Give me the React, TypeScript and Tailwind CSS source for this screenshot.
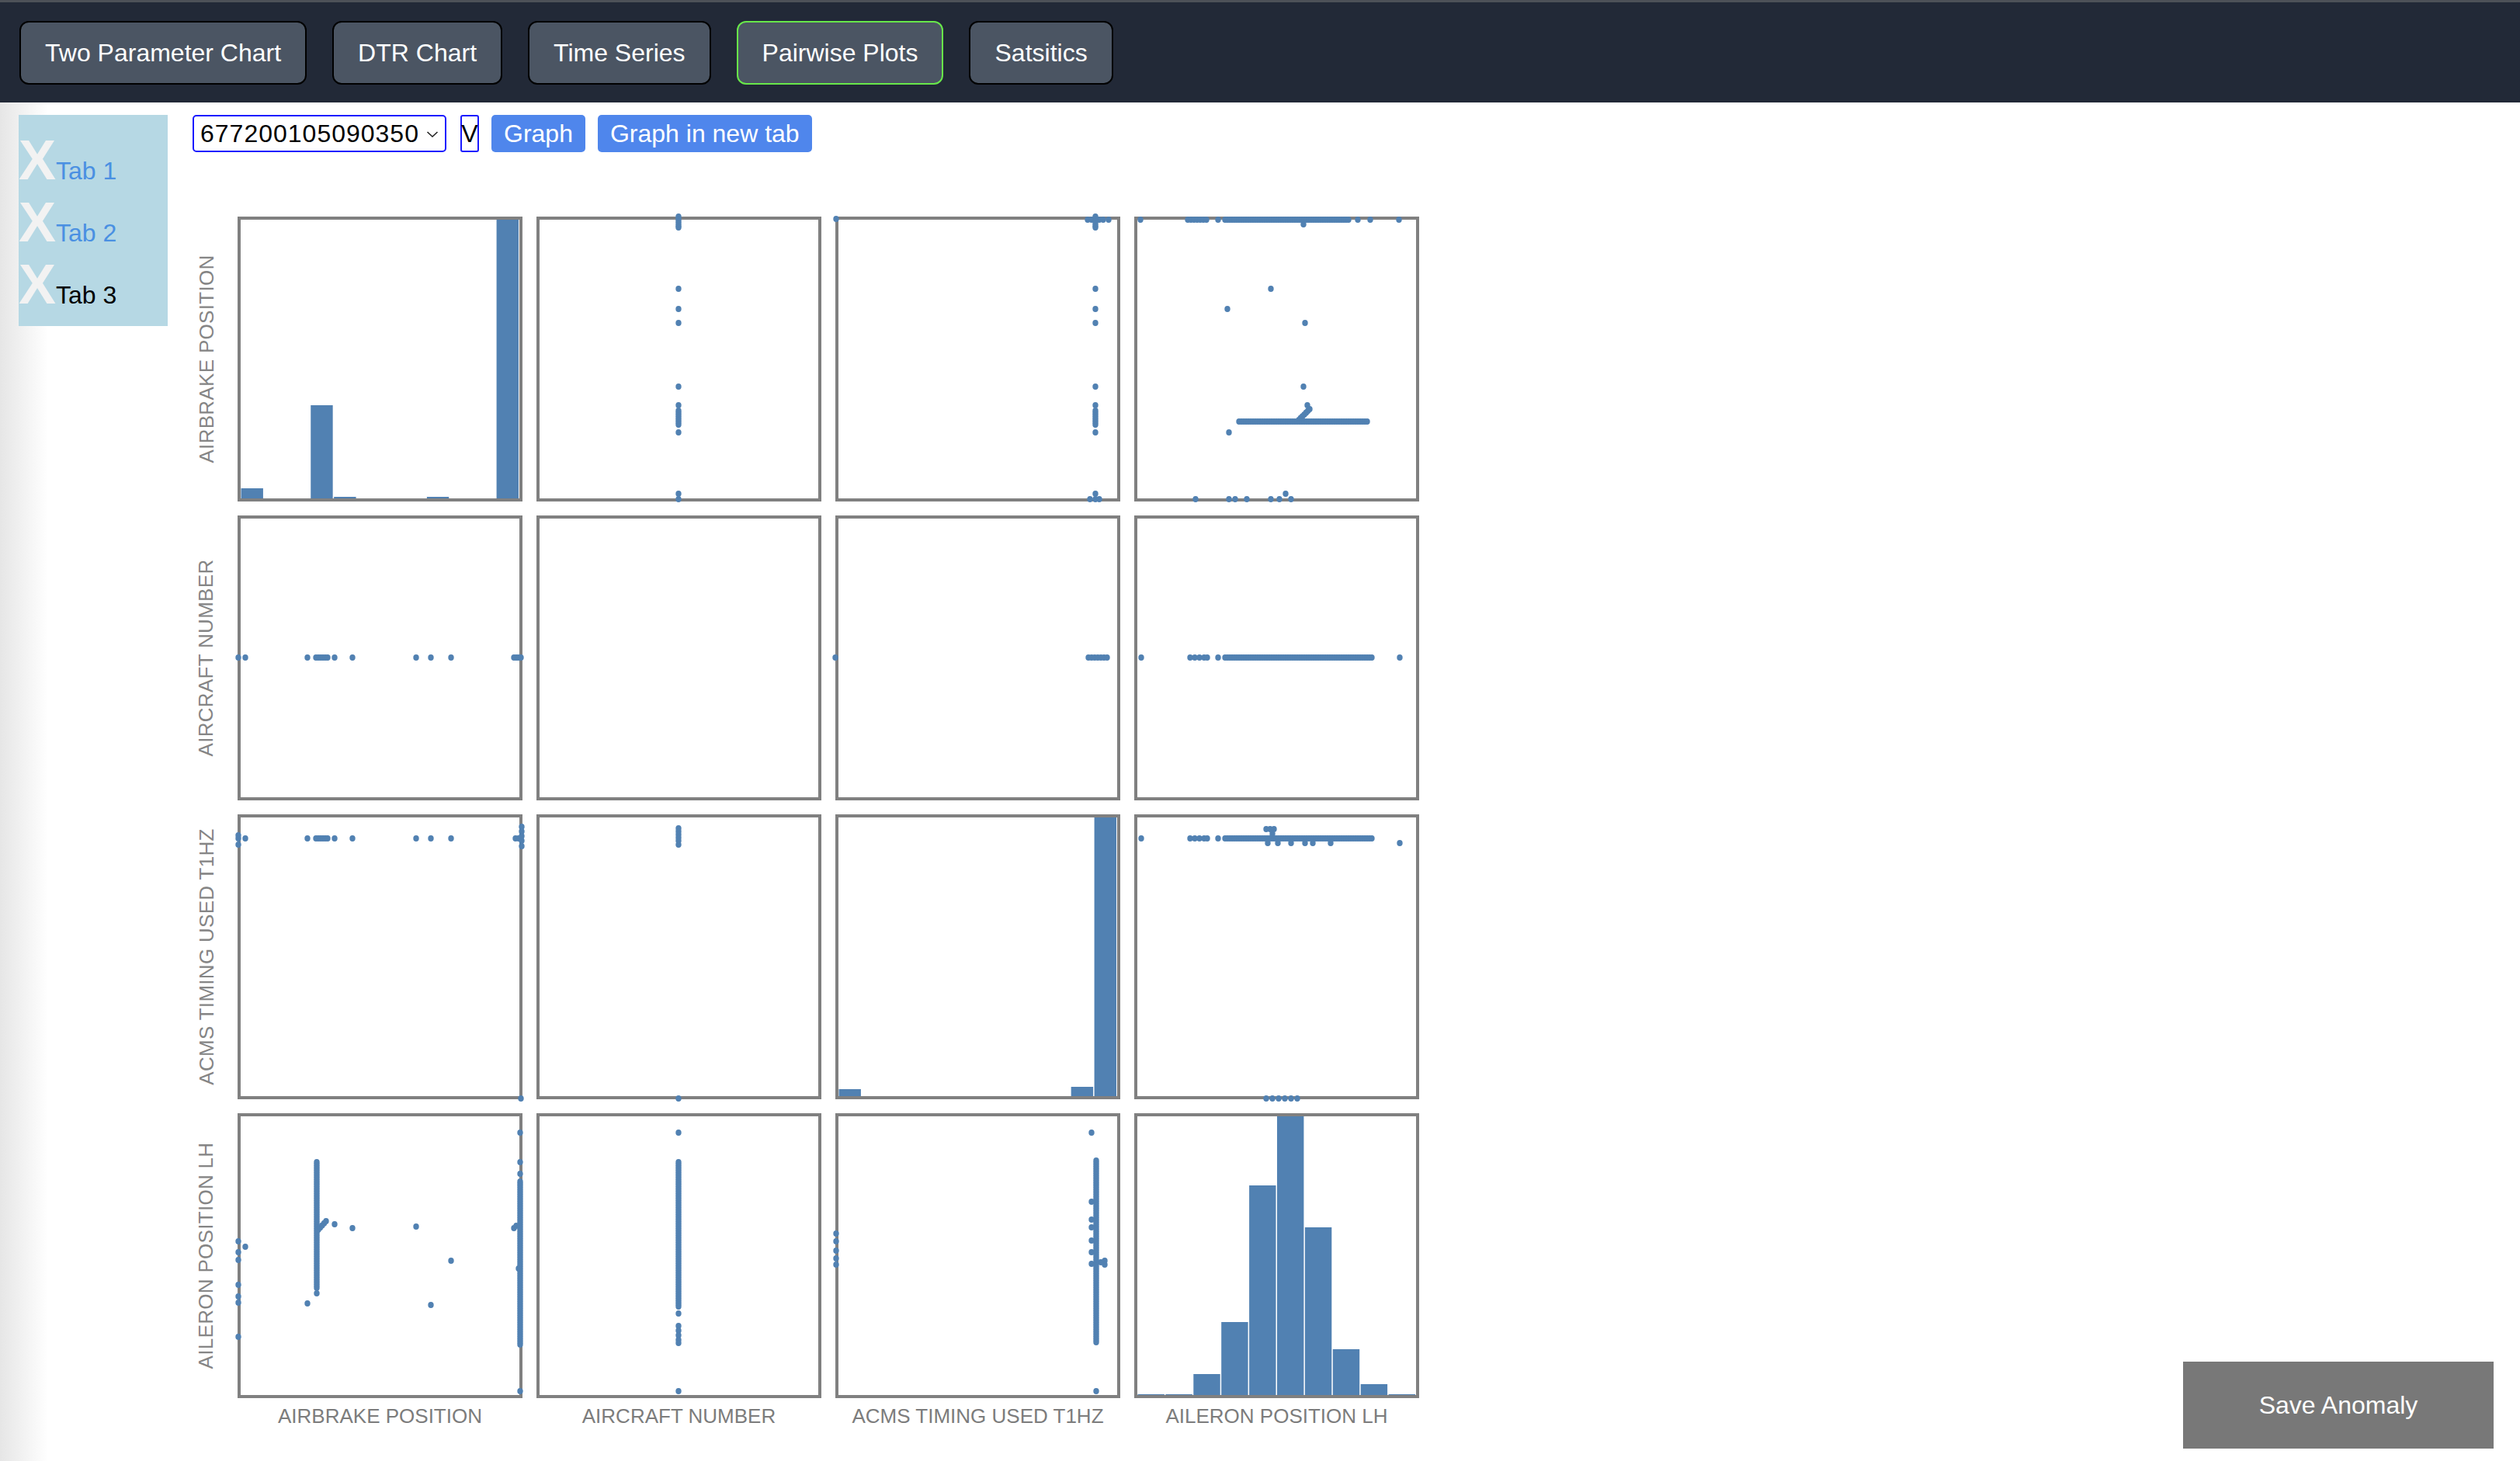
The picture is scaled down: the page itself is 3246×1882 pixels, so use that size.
import React from "react";

type P = [number, number];

const DOT = "#5181b2";

const range = (a: number, b: number, step = 3) => {
  const out: number[] = [];
  for (let v = a; v <= b; v += step) out.push(v);
  return out;
};
const atX = (x: number, ys: number[]): P[] => ys.map((y) => [x, y]);
const atY = (y: number, xs: number[]): P[] => xs.map((x) => [x, y]);
const seg = (x1: number, y1: number, x2: number, y2: number, n = 6): P[] =>
  Array.from({ length: n + 1 }, (_, i) => [x1 + ((x2 - x1) * i) / n, y1 + ((y2 - y1) * i) / n]);

// airbrake position values along x
const airX = [1, 10, 90, ...range(101, 118, 3), 125, 148, 230, 249, 275, ...range(356, 366, 3)];
// airbrake position values along y
const airY = [0, 3, 6, 9, 12, 14, 93, 119, 137, 219, 243, ...range(250, 268, 3), 278, 357, 364];
// aileron values along x
const ailX = [9, 72, 78, 84, 90, 94, 108, ...range(117, 308, 3), 342];

type Hist = { n: number; h: number[] };

const cells: { points?: P[]; bars?: Hist }[][] = [
  [
    { bars: { n: 12, h: [13, 0, 0, 120, 2, 0, 0, 0, 2, 0, 0, 359] } },
    { points: atX(183, airY) },
    {
      points: [
        ...atY(4, [325, 330, 340, 345, 352]),
        ...atX(335, airY),
        [1, 3],
        [328, 364],
        [340, 364],
      ],
    },
    {
      points: [
        ...atY(4, [8, 69, 73, 77, 81, 85, 89, 93, 108, ...range(117, 277, 3), 288, 304, 341]),
        [218, 10],
        [176, 93],
        [120, 119],
        [220, 137],
        [218, 219],
        [223, 243],
        ...seg(212, 262, 226, 248),
        ...atY(264, range(135, 301, 3)),
        [122, 278],
        [195, 357],
        ...atY(364, [79, 122, 130, 145, 176, 187, 202]),
      ],
    },
  ],
  [
    { points: atY(183, airX) },
    {},
    { points: [[0, 183], ...atY(183, range(326, 351, 4))] },
    { points: atY(183, ailX) },
  ],
  [
    {
      points: [
        ...atY(31, airX.filter((x) => x < 300)),
        [1, 27],
        [1, 39],
        [358, 31],
        [362, 31],
        ...atX(366, [16, 22, 28, 34, 41]),
        [365, 366],
      ],
    },
    { points: [...atX(183, [18, 22, 26, 30, 34, 39]), [183, 366]] },
    { bars: { n: 12, h: [9, 0, 0, 0, 0, 0, 0, 0, 0, 0, 12, 359] } },
    {
      points: [
        ...atY(31, ailX.filter((x) => x < 330)),
        [342, 37],
        ...atY(19, [170, 175, 180]),
        ...atY(25, [178]),
        ...atY(37, [172, 185, 202, 220, 230, 253]),
        ...atY(366, [170, 178, 186, 194, 202, 210]),
      ],
    },
  ],
  [
    {
      points: [
        ...atX(1, [165, 179, 189, 221, 236, 244, 288]),
        [10, 172],
        ...atX(102, range(63, 226, 3)),
        [102, 232],
        [90, 245],
        ...seg(104, 150, 114, 139, 4),
        [125, 143],
        [148, 148],
        [230, 146],
        [249, 247],
        [275, 190],
        ...atX(364, [25, 63, 78, ...range(88, 299, 3), 358]),
        [356, 148],
        [359, 145],
        [362, 200],
      ],
    },
    { points: atX(183, [25, ...range(63, 250, 3), 258, 274, 280, 286, 292, 296, 358]) },
    {
      points: [
        ...atX(1, [155, 165, 177, 187, 195]),
        [330, 25],
        ...atX(336, range(61, 296, 3)),
        ...atX(330, [114, 137, 147, 164, 179, 194]),
        [347, 190],
        [347, 195],
        [342, 192],
        [336, 358],
      ],
    },
    { bars: { n: 10, h: [1, 1, 27, 94, 270, 359, 216, 59, 14, 1] } },
  ],
];

const names = ["AIRBRAKE POSITION", "AIRCRAFT NUMBER", "ACMS TIMING USED T1HZ", "AILERON POSITION LH"];

function Cell({ points = [], bars }: { points?: P[]; bars?: Hist }) {
  const w = bars ? 359 / bars.n : 0;
  return (
    <svg width={367} height={367} className="block shrink-0 overflow-visible">
      <rect x={2} y={2} width={363} height={363} fill="#fff" stroke="#808080" strokeWidth={4} />
      {bars &&
        bars.h.map((h, i) =>
          h > 0 ? (
            <rect key={i} x={4 + i * w + 0.5} y={363 - h} width={w - 1.5} height={h} fill={DOT} />
          ) : null
        )}
      {points.map(([x, y], i) => (
        <ellipse key={i} cx={x} cy={y} rx={3.7} ry={4.1} fill={DOT} />
      ))}
    </svg>
  );
}

const tabs = ["Two Parameter Chart", "DTR Chart", "Time Series", "Pairwise Plots", "Satsitics"];

export default function App() {
  return (
    <div className="h-[1882px] flex flex-col bg-white font-['Liberation_Sans',Arial,sans-serif] overflow-hidden">
      {/* top nav */}
      <nav className="h-[132px] shrink-0 bg-[#222937] border-t-[3px] border-[#4d5158] flex items-center gap-[33px] px-[25px]">
        {tabs.map((t) => (
          <button
            key={t}
            className={`h-[82px] px-[31px] rounded-[12px] border-2 bg-[#4b5563] text-white text-[32px] ${
              t === "Pairwise Plots" ? "border-[#68e84a]" : "border-black"
            }`}
          >
            {t}
          </button>
        ))}
      </nav>

      <div className="flex-1 flex bg-[linear-gradient(to_right,#e6e6e6,#ffffff_62px)]">
        {/* tab list */}
        <aside className="ml-[24px] mt-[16px] w-[192px] h-[272px] shrink-0 bg-[#b6d8e4] pt-[18px]">
          {["Tab 1", "Tab 2", "Tab 3"].map((t, i) => (
            <div key={t} className="h-[80px] text-[72px] leading-[80px] whitespace-nowrap">
              <span className="text-[#f2f2f2] font-bold">X</span>
              <span className={`text-[32px] leading-none ${i === 2 ? "text-black" : "text-[#4a90e2]"}`}>{t}</span>
            </div>
          ))}
        </aside>

        <main className="ml-[32px] mt-[16px] shrink-0">
          <div className="h-[48px] flex items-stretch">
            <div className="w-[327px] border-2 border-[#1a1aff] rounded-[5px] pl-[8px] pr-[8px] flex items-center justify-between text-[32px] text-black tracking-[1px]">
              <span>677200105090350</span>
              <svg width="16" height="10" viewBox="0 0 16 10" className="mt-[2px]">
                <polyline points="1.5,2 8,8 14.5,2" fill="none" stroke="#222" strokeWidth="1.6" />
              </svg>
            </div>
            <div className="ml-[18px] w-[24px] border-2 border-[#1a1aff] rounded-[3px] flex items-center justify-center text-[32px] text-black">
              V
            </div>
            <button className="ml-[16px] px-[16px] bg-[#4f86ec] rounded-[5px] text-white text-[32px]">Graph</button>
            <button className="ml-[16px] px-[16px] bg-[#4f86ec] rounded-[5px] text-white text-[32px]">
              Graph in new tab
            </button>
          </div>

          {/* pairwise grid */}
          <div className="mt-[83px] flex flex-col gap-[18px]">
            {cells.map((row, r) => (
              <div key={r} className="flex">
                <div className="w-[36px] mr-[22px] h-[367px] flex items-center justify-center">
                  <span className="shrink-0 -rotate-90 whitespace-nowrap text-[26px] text-[#858585] tracking-[0.3px]">
                    {names[r]}
                  </span>
                </div>
                <div className="flex gap-[18px]">
                  {row.map((c, i) => (
                    <Cell key={i} points={c.points} bars={c.bars} />
                  ))}
                </div>
              </div>
            ))}
          </div>
          <div className="ml-[58px] mt-[4px] flex gap-[18px]">
            {names.map((n) => (
              <div key={n} className="w-[367px] text-center text-[26px] text-[#7c7c7c] whitespace-nowrap">
                {n}
              </div>
            ))}
          </div>
        </main>

        <div className="flex-1 flex items-end justify-end pr-[34px] pb-[16px]">
          <button className="w-[400px] h-[112px] bg-[#787878] text-white text-[32px]">Save Anomaly</button>
        </div>
      </div>
    </div>
  );
}
